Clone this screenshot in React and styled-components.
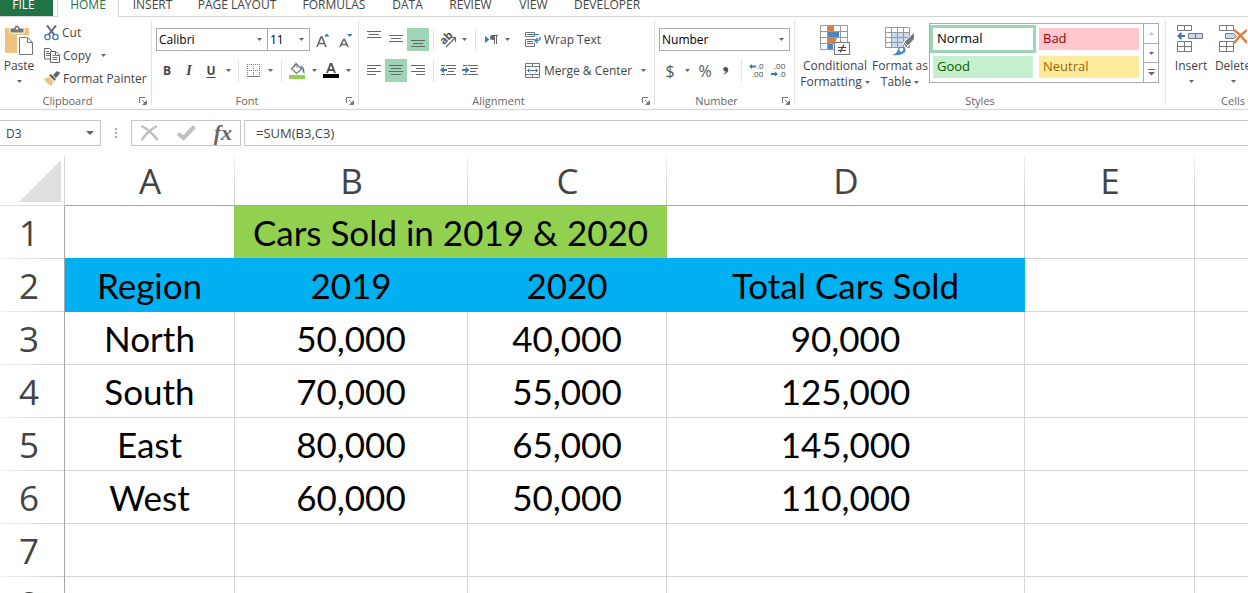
import React from 'react';
import styled, { createGlobalStyle } from 'styled-components'

const GlobalStyle = createGlobalStyle`
    * {
        box-sizing: border-box;
    }
    body {
        margin: 0;
        background: #ffffff;
        color: #444444;
        font-family: 'Open Sans', 'Noto Sans', sans-serif;
        font-size: 12px;
        overflow: hidden;
    }
    button, input, select {
        font: inherit;
        color: inherit;
        margin: 0;
        padding: 0;
        border: 0;
        background: none;
        border-radius: 0;
        outline: none;
    }
    svg {
        display: block;
        flex: none;
    }
`
const Page = styled.div`
    height: 100vh;
    overflow: hidden;
`

/* ---------- tabs ---------- */
const TabBar = styled.nav`
    display: flex;
    height: 17px;
    border-bottom: 1px solid #d4d4d4;
`
const FileTab = styled.button`
    width: 53px;
    height: 16px;
    padding: 0 6px 6px 0;
    background: #217346;
    color: #ffffff;
    line-height: 10px;
`
const Tab = styled.button`
    height: ${props => props.$active ? '17px' : '16px'};
    width: ${props => props.$width}px;
    padding-bottom: ${props => props.$active ? '7px' : '6px'};
    margin-left: ${props => props.$active ? '4px' : '0'};
    border: solid #d4d4d4;
    border-width: ${props => props.$active ? '0 1px' : '0'};
    background: #ffffff;
    color: ${props => props.$active ? '#217346' : '#444444'};
    line-height: 10px;
    white-space: nowrap;
`

/* ---------- ribbon ---------- */
const Ribbon = styled.div`
    display: flex;
    height: 93px;
    border-bottom: 1px solid #d4d4d4;
    overflow: hidden;
`
const GroupBox = styled.section`
    display: flex;
    flex: none;
    flex-direction: column;
    justify-content: space-between;
    width: ${props => props.$width}px;
    margin: 4px 0;
    border-right: 1px solid #e1e1e1;
`
const GroupFooter = styled.div`
    display: flex;
    align-items: center;
    height: 8px;
    color: #666666;
    font-size: 11px;
    line-height: 16px;
    text-align: center;
`
const GroupTitle = styled.span`
    flex: 1;
`
const LauncherButton = styled.button`
    display: flex;
    justify-content: center;
    width: 16px;
`
const Row = styled.div`
    display: flex;
    align-items: center;
    height: 23px;
`
const TwoRows = styled.div`
    display: flex;
    flex-direction: column;
    gap: 8px;
    padding: 7px 0 0 4px;
`
const ThreeRows = styled.div`
    padding-left: 6px;
`
const Columns = styled.div`
    display: flex;
`
const ToolButton = styled.button`
    display: flex;
    flex: none;
    align-items: center;
    justify-content: ${props => props.$start ? 'flex-start' : 'center'};
    gap: 3px;
    width: ${props => props.$width ? props.$width + 'px' : 'auto'};
    height: 23px;
    background: ${props => props.$on ? '#9fd5b7' : 'transparent'};
    white-space: nowrap;
`
const BigButton = styled.button`
    display: flex;
    flex: none;
    flex-direction: column;
    align-items: center;
    width: ${props => props.$width}px;
    padding-top: 4px;
    line-height: 16px;
`
const IconSlot = styled.span`
    display: flex;
    height: 33px;
`
const BigLabel = styled.span`
    display: flex;
    align-items: center;
    gap: 3px;
    height: ${props => props.$caret ? '14px' : '16px'};
    white-space: nowrap;
`
const Bold = styled.span`
    font-weight: 700;
`
const Italic = styled.span`
    font-family: 'Liberation Serif', serif;
    font-size: 14px;
    font-style: italic;
    font-weight: 700;
`
const Underlined = styled.span`
    font-weight: 700;
    text-decoration: underline;
    text-underline-offset: 2px;
`
const Sign = styled.span`
    font-size: 16px;
    color: #555555;
`
const Divider = styled.span`
    display: flex;
    flex: none;
    justify-content: center;
    width: ${props => props.$width}px;
    height: 22px;
    &::before {
        content: '';
        width: 1px;
        background: #e1e1e1;
    }
`
const TallRule = styled.span`
    width: 1px;
    height: 54px;
    margin: 7px 3px 0 5px;
    background: #e1e1e1;
`
const SelectBox = styled.label`
    display: flex;
    flex: none;
    align-items: center;
    width: ${props => props.$width}px;
    height: 23px;
    margin-right: ${props => props.$joined ? '-1px' : '0'};
    padding-right: 5px;
    border: 1px solid #ababab;
    select {
        flex: 1;
        min-width: 0;
        padding-left: 2px;
        appearance: none;
        color: #000000;
    }
`

/* ---------- style gallery ---------- */
const Gallery = styled.div`
    display: flex;
    align-self: flex-start;
    height: 60px;
    margin: 2px 0 0 4px;
    border: 1px solid #ababab;
`
const Swatches = styled.div`
    display: grid;
    grid-template-columns: 100px 100px;
    grid-auto-rows: 22px;
    gap: 6px;
    width: 213px;
    padding: 4px 3px;
`
const Swatch = styled.button`
    padding: 0 0 2px 4px;
    background: ${props => props.$bg};
    color: ${props => props.$color};
    font-size: 13px;
    line-height: 20px;
    text-align: left;
    outline: ${props => props.$selected ? '3px solid #9fd5b7' : 'none'};
`
const Scroller = styled.div`
    display: flex;
    flex-direction: column;
    width: 15px;
    border-left: 1px solid #ababab;
`
const ScrollButton = styled.button`
    display: flex;
    flex: 1;
    align-items: center;
    justify-content: center;
    & + & {
        border-top: 1px solid #ababab;
    }
`

/* ---------- formula bar ---------- */
const FormulaBar = styled.div`
    display: flex;
    height: 46px;
    padding: 10px 0;
`
const NameBox = styled.div`
    display: flex;
    align-items: center;
    width: 101px;
    padding-right: 6px;
    border: 1px solid #c6c6c6;
    border-left: 0;
    input {
        flex: 1;
        min-width: 0;
        padding-left: 6px;
    }
`
const Grip = styled.span`
    display: flex;
    align-items: center;
    justify-content: center;
    width: 30px;
`
const FormulaTools = styled.div`
    display: flex;
    align-items: center;
    justify-content: space-between;
    width: 110px;
    margin-right: 3px;
    padding: 0 8px;
    border: 1px solid #c6c6c6;
`
const Fx = styled.span`
    color: #666666;
    font-family: 'Liberation Serif', serif;
    font-size: 22px;
    font-style: italic;
    font-weight: 700;
    line-height: 22px;
`
const FormulaInput = styled.input`
    && {
        flex: 1;
        min-width: 0;
        padding-left: 11px;
        border: 1px solid #c6c6c6;
        border-right: 0;
        font-size: 13px;
    }
`

/* ---------- sheet ---------- */
const Sheet = styled.table`
    width: 100%;
    table-layout: fixed;
    border-collapse: separate;
    border-spacing: 0;
    td, th {
        padding: 0;
        font-weight: 400;
        text-align: center;
        white-space: nowrap;
    }
    td:last-child {
        border-right: 0;
    }
    th:last-child {
        background: none;
    }
`
const Col = styled.col`
    width: ${props => props.$width ? props.$width + 'px' : 'auto'};
`
const Corner = styled.th`
    height: 50px;
    border-bottom: 1px solid #e1e1e1;
    border-right: 1px solid #d4d4d4;
    svg {
        margin: 0 3px 0 auto;
    }
`
const ColumnHeader = styled.th`
    height: 50px;
    border-bottom: 1px solid #a6a6a6;
    background: linear-gradient(#f0f0f0, #d0d0d0) right / 1px 100% no-repeat;
    font-size: 35px;
    line-height: 48px;
`
const RowHeader = styled.th`
    height: 53px;
    border-right: 1px solid #a6a6a6;
    background: linear-gradient(to right, #f0f0f0, #d0d0d0) bottom / 100% 1px no-repeat;
    font-size: 35px;
    line-height: 52px;
    && {
        padding-right: 6px;
    }
`
const Cell = styled.td`
    height: 53px;
    border-right: 1px solid ${props => props.$fill || '#d4d4d4'};
    border-bottom: 1px solid ${props => props.$fill || '#d4d4d4'};
    background: ${props => props.$fill || '#ffffff'};
    box-shadow: ${props => props.$bleed ? `${props.$bleed} 0 ${props.$fill}` : 'none'};
    color: #000000;
    font-family: Lato, 'Open Sans', sans-serif;
    font-size: 35px;
    line-height: 52px;
`

/* ---------- icons ---------- */
const Caret = ({ color = '#666666', up, size = 5 }) => (
    <svg width={size} height={size === 5 ? 3 : 4} viewBox="0 0 6 3" preserveAspectRatio="none">
        <path d={up ? 'M0 3L3 0L6 3Z' : 'M0 0H6L3 3Z'} fill={color}/>
    </svg>
)
const Launcher = () => (
    <svg width="8" height="8" viewBox="0 0 8 8" fill="none" stroke="#777777">
        <path d="M0.5 6V0.5H6M3 3L6.5 6.5M7.5 3.5V7.5H3.5"/>
        <path d="M7 4V7H4Z" fill="#777777" stroke="none"/>
    </svg>
)
const PasteIcon = () => (
    <svg width="30" height="31" viewBox="0 0 30 31">
        <rect x="1" y="3" width="24" height="25" rx="1" fill="#edc47c"/>
        <path d="M6 3h4a3 3 0 0 1 6 0h4v5H6z" fill="#777777" stroke="#ffffff"/>
        <circle cx="13" cy="3.5" r="1.2" fill="#ffffff"/>
        <path d="M14.5 11.5h9l5 5.5v13h-14z" fill="#ffffff" stroke="#ffffff" strokeWidth="3"/>
        <path d="M15.5 12.5h8l5 5v12h-13zM23.5 12.5v5h5" fill="#ffffff" stroke="#777777"/>
    </svg>
)
const CutIcon = () => (
    <svg width="15" height="16" viewBox="0 0 15 16" fill="none">
        <path d="M3 0.5L10.5 10M12 0.5L4.5 10" stroke="#666666" strokeWidth="2"/>
        <circle cx="3.5" cy="12" r="2.6" stroke="#3c78b8" strokeWidth="1.3"/>
        <circle cx="11.5" cy="12" r="2.6" stroke="#3c78b8" strokeWidth="1.3"/>
    </svg>
)
const CopyIcon = () => (
    <svg width="16" height="15" viewBox="0 0 16 15" fill="#ffffff" stroke="#666666">
        <path d="M0.5 0.5h5l3 3v7.5h-8z"/>
        <path d="M2 3.5h3M2 5.5h4M2 7.5h4" stroke="#3c78b8"/>
        <path d="M6.5 3.5h5.5l3.5 3.5v7.5h-9zM11.5 3.5v4h4"/>
        <path d="M8.5 7.5h2M8.5 9.5h5M8.5 11.5h5" stroke="#3c78b8"/>
    </svg>
)
const BrushIcon = () => (
    <svg width="16" height="15" viewBox="0 0 16 15">
        <path d="M0 8L5 6L10 11L7 15Q3 13 0 8z" fill="#edc47c"/>
        <path d="M5 4.5L7 3L12 8L10.5 10zM9 4L13 0L16 1.5L15.5 3L12 7z" fill="#666666"/>
    </svg>
)
const FontSizeIcon = ({ down }) => (
    <svg width="14" height="16" viewBox="0 0 14 16">
        <path
            d={down ? 'M1 15L4.5 7.5H5.5L9 15M2.5 12.5H7.5' : 'M1 15L5 5H6L10 15M2.5 11.5H8.5'}
            fill="none" stroke="#666666" strokeWidth="1.6"
        />
        <path d={down ? 'M8 2h5.5l-2.7 3z' : 'M8 4.5h5.5L10.7 1.5z'} fill="#3c78b8"/>
    </svg>
)
const BorderIcon = () => (
    <svg width="13" height="13" viewBox="0 0 13 13" stroke="#777777">
        <path d="M0 0.5H13M0 6.5H13M0.5 0V12M6.5 0V12M12.5 0V12" strokeDasharray="1 1"/>
        <path d="M0 12.5H13"/>
    </svg>
)
const FillIcon = () => (
    <svg width="16" height="17" viewBox="0 0 16 17" fill="none">
        <path d="M2.5 6.500L7.500 2L12.500 7L7.500 11.500Z" fill="#ffffff" stroke="#777777" strokeWidth="1.2"/>
        <path d="M5.500 5.500V2Q6.500 0 8 2V6" stroke="#777777"/>
        <path d="M11 3.500Q16 4 15.500 12Q13.500 11 13.500 7.500z" fill="#3c78b8"/>
        <rect y="13" width="16" height="4" fill="#92d050"/>
    </svg>
)
const FontColorIcon = () => (
    <svg width="16" height="15" viewBox="0 0 16 15">
        <path d="M4 10L7.5 1H8.5L12 10M5.5 7H10.5" fill="none" stroke="#555555" strokeWidth="1.9"/>
        <rect y="11" width="16" height="4" fill="#000000"/>
    </svg>
)
const LinesIcon = ({ lines, shift = 0 }) => (
    <svg width="14" height="23" viewBox="0 0 14 23" stroke="#666666">
        {lines.map(([x, w], i) => <path key={i} d={`M${x} ${shift + i * 3 + 0.5}h${w}`}/>)}
    </svg>
)
const OrientationIcon = () => (
    <svg width="17" height="17" viewBox="0 0 17 17" fill="none" stroke="#666666">
        <text x="0" y="11" transform="rotate(-45 6 8)" fill="#555555" stroke="none" fontSize="11" fontWeight="700">ab</text>
        <path d="M6 16L15 7M11 6.5H15.5V11" strokeWidth="1.2"/>
    </svg>
)
const DirectionIcon = () => (
    <svg width="13" height="10" viewBox="0 0 13 10">
        <path d="M0 1L4.5 4.500L0 8z" fill="#3c78b8"/>
        <path d="M8 0.5h5M9.5 0v9M11.5 0v9" stroke="#666666"/>
        <circle cx="7.5" cy="2.5" r="2.5" fill="#666666"/>
    </svg>
)
const IndentIcon = ({ right }) => (
    <svg width="16" height="12" viewBox="0 0 16 12">
        <path d="M1 0.5h4M6 0.5h10M8 3.5h8M8 6.5h6M1 9.5h4M6 9.5h10" stroke="#666666"/>
        <path d={right ? 'M7.5 5L3.5 1.5V4H0V6H3.5V8.5z' : 'M0 5L4 1.5V4H7V6H4V8.5z'} fill="#3c78b8"/>
    </svg>
)
const WrapIcon = () => (
    <svg width="16" height="16" viewBox="0 0 16 16" fill="none" stroke="#777777">
        <path d="M0.5 0.5h9v4h-9zM9.5 8V7.5h-9v7h9V11"/>
        <path d="M2 2.5h12M2 9.5h6M2 11.5h6" stroke="#3c78b8"/>
        <path d="M15 5v1.5q0 2-4 2M12.5 6L10 8.500l2.500 2.500" stroke="#3c78b8" strokeWidth="1.4"/>
    </svg>
)
const MergeIcon = () => (
    <svg width="16" height="15" viewBox="0 0 16 15" fill="none" stroke="#777777">
        <path d="M0.5 0.5h14v14h-14zM0.5 3.5h14M0.5 11.5h14M7.5 0v3M7.5 12v3"/>
        <path d="M2 7.5h11M4.5 5.5L2.5 7.5l2 2M10.5 5.5l2 2l-2 2" stroke="#3c78b8"/>
    </svg>
)
const CommaIcon = () => (
    <svg width="6" height="8" viewBox="0 0 6 8" fill="#555555">
        <path d="M3 0a2.300 2.300 0 1 0 0 4.500q-0.500 1.500-2 2v1Q5.500 6 5.300 2.500Q5 0 3 0z"/>
    </svg>
)
const DecimalIcon = ({ less }) => (
    <svg width="16" height="15" viewBox="0 0 16 15" fontSize="8" fill="#444444">
        <text x={less ? 3 : 8} y="6">{less ? '.00' : '.0'}</text>
        <text x={less ? 8 : 3} y="14">{less ? '.0' : '.00'}</text>
        <path
            d={less ? 'M7 11L4 8.5V10H0V12H4V13.5z' : 'M0 3.500L3 1V2.500H7V4.500H3V6z'}
            fill="#3c78b8"
        />
    </svg>
)
const ConditionalIcon = () => (
    <svg width="30" height="31" viewBox="0 0 30 31" fill="none">
        <path d="M0.5 0.5h27v24h-27zM0 6.5h28M0 12.5h28M0 18.5h28M7.5 0v25M20.5 0v25" stroke="#999999"/>
        <path d="M8 1h6v5H8zM8 13h9l-2 5H8z" fill="#d97f3f"/>
        <path d="M8 7h11v5H8zM8 19h5v5H8z" fill="#4a86c0"/>
        <rect x="14.5" y="17.5" width="15" height="12" fill="#ffffff" stroke="#777777"/>
        <path d="M18 22.5h8M18 25.5h8M24 19.5l-4 8" stroke="#444444" strokeWidth="1.2"/>
    </svg>
)
const TableIcon = () => (
    <svg width="30" height="31" viewBox="0 -2 30 31" fill="none">
        <path d="M7 6h18v14H7z" fill="#c7daf0"/>
        <path d="M0.5 0.5h24v20h-24zM0 5.5h25M0 10.5h25M0 15.5h25M6.5 0v21M12.5 0v21M18.5 0v21" stroke="#999999"/>
        <path d="M29.500 5L18 16l3 5l8.500-9z" fill="#777777" stroke="#ffffff"/>
        <path d="M19 15l4 4" stroke="#ffffff"/>
        <path d="M7 28q5-1 6-6q3-4 7-1q2 4-3 6q-4 2-10 1z" fill="#4a86c0"/>
        <path d="M14 23q1-3 4-2q1 3-2 4" fill="#ffffff"/>
    </svg>
)
const CellsIcon = ({ remove }) => (
    <svg width="28" height="29" viewBox="0 0 28 29" fill="none" stroke="#777777">
        <path d="M0.5 0.5h14v5h-14zM7.5 0v6M0.5 16.5h14v10h-14zM7.5 16v11M0 21.5h15"/>
        <path d={remove ? 'M6.5 8.5h8l3 3l-3 2h-8z' : 'M11.5 8.5h14v5h-14zM18.5 8v6'} fill="#c7daf0"/>
        {remove
            ? <path d="M15 5q7 5 13 13M28 5q-7 5-13 13" stroke="#d97f3f" strokeWidth="2.5"/>
            : <path d="M1 11h7M4.5 8L1.5 11l3 3" stroke="#3c78b8" strokeWidth="2"/>}
    </svg>
)
const CornerIcon = () => (
    <svg width="42" height="42" viewBox="0 0 42 42">
        <path d="M42 0V42H0z" fill="#dfdfdf"/>
    </svg>
)
const CancelIcon = () => (
    <svg width="19" height="16" viewBox="0 0 19 16" fill="none" stroke="#c0c0c0" strokeWidth="2.5">
        <path d="M1.5 1Q11 6 17.5 15M17 1Q8 6 1.5 15"/>
    </svg>
)
const EnterIcon = () => (
    <svg width="19" height="16" viewBox="0 0 19 16" fill="none" stroke="#c0c0c0" strokeWidth="4">
        <path d="M1 8.5L6.5 13L17.5 1.5"/>
    </svg>
)

/* ---------- parts ---------- */
const Group = ({ title, width, launcher, children }) => (
    <GroupBox $width={width}>
        {children}
        <GroupFooter>
            <GroupTitle>{title}</GroupTitle>
            {launcher && <LauncherButton aria-label={`${title} settings`}><Launcher/></LauncherButton>}
        </GroupFooter>
    </GroupBox>
)
const Dropdown = ({ width = 12, label }) => (
    <ToolButton $width={width} aria-label={label}><Caret/></ToolButton>
)
const Picker = ({ label, value, width, joined }) => (
    <SelectBox $width={width} $joined={joined}>
        <select aria-label={label} defaultValue={value}>
            <option>{value}</option>
        </select>
        <Caret/>
    </SelectBox>
)

const tabs = [
    ['HOME', 62], ['INSERT', 67], ['PAGE LAYOUT', 102], ['FORMULAS', 92],
    ['DATA', 55], ['REVIEW', 71], ['VIEW', 55], ['DEVELOPER', 92],
]
const wide = [[0, 14], [2, 10], [0, 14]]
const left = [[0, 14], [0, 9], [0, 14], [0, 9]]
const center = [[0, 14], [2, 10], [0, 14], [2, 10]]
const right = [[0, 14], [5, 9], [0, 14], [5, 9]]

const columns = [['A', 170], ['B', 233], ['C', 199], ['D', 358], ['E', 170], ['', 0]]
const rows = [
    ['North', '50,000', '40,000', '90,000', '', ''],
    ['South', '70,000', '55,000', '125,000', '', ''],
    ['East', '80,000', '65,000', '145,000', '', ''],
    ['West', '60,000', '50,000', '110,000', '', ''],
    ['', '', '', '', '', ''],
    ['', '', '', '', '', ''],
]

const ClipboardGroup = () => (
    <Group title="Clipboard" width={152} launcher>
        <Columns>
            <BigButton $width={38}>
                <IconSlot><PasteIcon/></IconSlot>
                <BigLabel>Paste</BigLabel>
                <BigLabel $caret><Caret/></BigLabel>
            </BigButton>
            <ThreeRows>
                <ToolButton $start><CutIcon/>Cut</ToolButton>
                <Row>
                    <ToolButton $start><CopyIcon/>Copy</ToolButton>
                    <Dropdown width={24} label="Copy options"/>
                </Row>
                <ToolButton $start><BrushIcon/>Format Painter</ToolButton>
            </ThreeRows>
        </Columns>
    </Group>
)
const FontGroup = () => (
    <Group title="Font" width={207} launcher>
        <TwoRows>
            <Row>
                <Picker label="Font" value="Calibri" width={112} joined/>
                <Picker label="Font size" value="11" width={43}/>
                <ToolButton $width={26} aria-label="Increase font size"><FontSizeIcon/></ToolButton>
                <ToolButton $width={20} aria-label="Decrease font size"><FontSizeIcon down/></ToolButton>
            </Row>
            <Row>
                <ToolButton $width={22}><Bold>B</Bold></ToolButton>
                <ToolButton $width={22}><Italic>I</Italic></ToolButton>
                <ToolButton $width={22}><Underlined>U</Underlined></ToolButton>
                <Dropdown label="Underline options"/>
                <Divider $width={8}/>
                <ToolButton $width={22} aria-label="Borders"><BorderIcon/></ToolButton>
                <Dropdown label="Border options"/>
                <Divider $width={10}/>
                <ToolButton $width={22} aria-label="Fill color"><FillIcon/></ToolButton>
                <Dropdown label="Fill options"/>
                <ToolButton $width={22} aria-label="Font color"><FontColorIcon/></ToolButton>
                <Dropdown label="Font color options"/>
            </Row>
        </TwoRows>
    </Group>
)
const AlignmentGroup = () => (
    <Group title="Alignment" width={296} launcher>
        <Columns>
            <TwoRows>
                <Row>
                    <ToolButton $width={22} aria-label="Top align"><LinesIcon lines={wide} shift={3}/></ToolButton>
                    <ToolButton $width={22} aria-label="Middle align"><LinesIcon lines={wide} shift={7}/></ToolButton>
                    <ToolButton $width={22} $on aria-label="Bottom align"><LinesIcon lines={wide} shift={12}/></ToolButton>
                    <Divider $width={8}/>
                    <ToolButton $width={22} aria-label="Orientation"><OrientationIcon/></ToolButton>
                    <Dropdown width={10} label="Orientation options"/>
                    <Divider $width={12}/>
                    <ToolButton $width={20} aria-label="Text direction"><DirectionIcon/></ToolButton>
                    <Dropdown label="Direction options"/>
                </Row>
                <Row>
                    <ToolButton $width={22} aria-label="Align left"><LinesIcon lines={left} shift={6}/></ToolButton>
                    <ToolButton $width={22} $on aria-label="Center"><LinesIcon lines={center} shift={6}/></ToolButton>
                    <ToolButton $width={22} aria-label="Align right"><LinesIcon lines={right} shift={6}/></ToolButton>
                    <Divider $width={8}/>
                    <ToolButton $width={22} aria-label="Decrease indent"><IndentIcon/></ToolButton>
                    <ToolButton $width={22} aria-label="Increase indent"><IndentIcon right/></ToolButton>
                </Row>
            </TwoRows>
            <TallRule/>
            <TwoRows>
                <ToolButton $start><WrapIcon/>Wrap Text</ToolButton>
                <Row>
                    <ToolButton $start><MergeIcon/>Merge &amp; Center</ToolButton>
                    <Dropdown width={22} label="Merge options"/>
                </Row>
            </TwoRows>
        </Columns>
    </Group>
)
const NumberGroup = () => (
    <Group title="Number" width={140} launcher>
        <TwoRows>
            <Picker label="Number format" value="Number" width={131}/>
            <Row>
                <ToolButton $width={22} aria-label="Currency"><Sign>$</Sign></ToolButton>
                <Dropdown label="Currency options"/>
                <ToolButton $width={24} aria-label="Percent"><Sign>%</Sign></ToolButton>
                <ToolButton $width={18} aria-label="Comma style"><CommaIcon/></ToolButton>
                <Divider $width={12}/>
                <ToolButton $width={20} aria-label="Increase decimal"><DecimalIcon/></ToolButton>
                <ToolButton $width={24} aria-label="Decrease decimal"><DecimalIcon less/></ToolButton>
            </Row>
        </TwoRows>
    </Group>
)
const StylesGroup = () => (
    <Group title="Styles" width={371}>
        <Columns>
            <BigButton $width={80}>
                <IconSlot><ConditionalIcon/></IconSlot>
                <BigLabel>Conditional</BigLabel>
                <BigLabel>Formatting <Caret/></BigLabel>
            </BigButton>
            <BigButton $width={50}>
                <IconSlot><TableIcon/></IconSlot>
                <BigLabel>Format as</BigLabel>
                <BigLabel>Table <Caret/></BigLabel>
            </BigButton>
            <Gallery>
                <Swatches>
                    <Swatch $bg="#ffffff" $color="#000000" $selected>Normal</Swatch>
                    <Swatch $bg="#ffc7ce" $color="#9c0006">Bad</Swatch>
                    <Swatch $bg="#c6efce" $color="#006100">Good</Swatch>
                    <Swatch $bg="#ffeb9c" $color="#9c6500">Neutral</Swatch>
                </Swatches>
                <Scroller>
                    <ScrollButton aria-label="Previous styles"><Caret up color="#bbbbbb"/></ScrollButton>
                    <ScrollButton aria-label="Next styles"><Caret/></ScrollButton>
                    <ScrollButton aria-label="More styles">
                        <svg width="7" height="7" viewBox="0 0 7 7" fill="#666666">
                            <path d="M0 0h7v1H0zM0 3h7L3.5 6.5z"/>
                        </svg>
                    </ScrollButton>
                </Scroller>
            </Gallery>
        </Columns>
    </Group>
)
const CellsGroup = () => (
    <Group title="Cells" width={135}>
        <Columns>
            <BigButton $width={50}>
                <IconSlot><CellsIcon/></IconSlot>
                <BigLabel>Insert</BigLabel>
                <BigLabel $caret><Caret/></BigLabel>
            </BigButton>
            <BigButton $width={34}>
                <IconSlot><CellsIcon remove/></IconSlot>
                <BigLabel>Delete</BigLabel>
                <BigLabel $caret><Caret/></BigLabel>
            </BigButton>
        </Columns>
    </Group>
)

const Worksheet = () => (
    <Sheet>
        <colgroup>
            <Col $width={65}/>
            {columns.map(([name, width], i) => <Col key={i} $width={width}/>)}
        </colgroup>
        <thead>
            <tr>
                <Corner aria-label="Select all"><CornerIcon/></Corner>
                {columns.map(([name], i) => <ColumnHeader key={i}>{name}</ColumnHeader>)}
            </tr>
        </thead>
        <tbody>
            <tr>
                <RowHeader>1</RowHeader>
                <Cell/>
                <Cell colSpan={2} $fill="#92d050" $bleed="-1px 0">Cars Sold in 2019 &amp; 2020</Cell>
                <Cell/>
                <Cell/>
                <Cell/>
            </tr>
            <tr>
                <RowHeader>2</RowHeader>
                {['Region', '2019', '2020', 'Total Cars Sold'].map(x => (
                    <Cell key={x} $fill="#00b0f0" $bleed="0 -1px">{x}</Cell>
                ))}
                <Cell/>
                <Cell/>
            </tr>
            {rows.map((row, i) => (
                <tr key={i}>
                    <RowHeader>{i + 3}</RowHeader>
                    {row.map((x, j) => <Cell key={j}>{x}</Cell>)}
                </tr>
            ))}
        </tbody>
    </Sheet>
)

export default function App() {
    return (
        <Page>
            <GlobalStyle/>
            <TabBar>
                <FileTab>FILE</FileTab>
                {tabs.map(([name, width]) => (
                    <Tab key={name} $width={width} $active={name === 'HOME'}>{name}</Tab>
                ))}
            </TabBar>
            <Ribbon>
                <ClipboardGroup/>
                <FontGroup/>
                <AlignmentGroup/>
                <NumberGroup/>
                <StylesGroup/>
                <CellsGroup/>
            </Ribbon>
            <FormulaBar>
                <NameBox>
                    <input aria-label="Name box" defaultValue="D3"/>
                    <Caret size={8}/>
                </NameBox>
                <Grip>
                    <svg width="2" height="10" viewBox="0 0 2 10" fill="#aaaaaa">
                        <path d="M0 0h2v2H0zM0 4h2v2H0zM0 8h2v2H0z"/>
                    </svg>
                </Grip>
                <FormulaTools>
                    <button aria-label="Cancel"><CancelIcon/></button>
                    <button aria-label="Enter"><EnterIcon/></button>
                    <button aria-label="Insert function"><Fx>fx</Fx></button>
                </FormulaTools>
                <FormulaInput aria-label="Formula" defaultValue="=SUM(B3,C3)"/>
            </FormulaBar>
            <Worksheet/>
        </Page>
    )
}
